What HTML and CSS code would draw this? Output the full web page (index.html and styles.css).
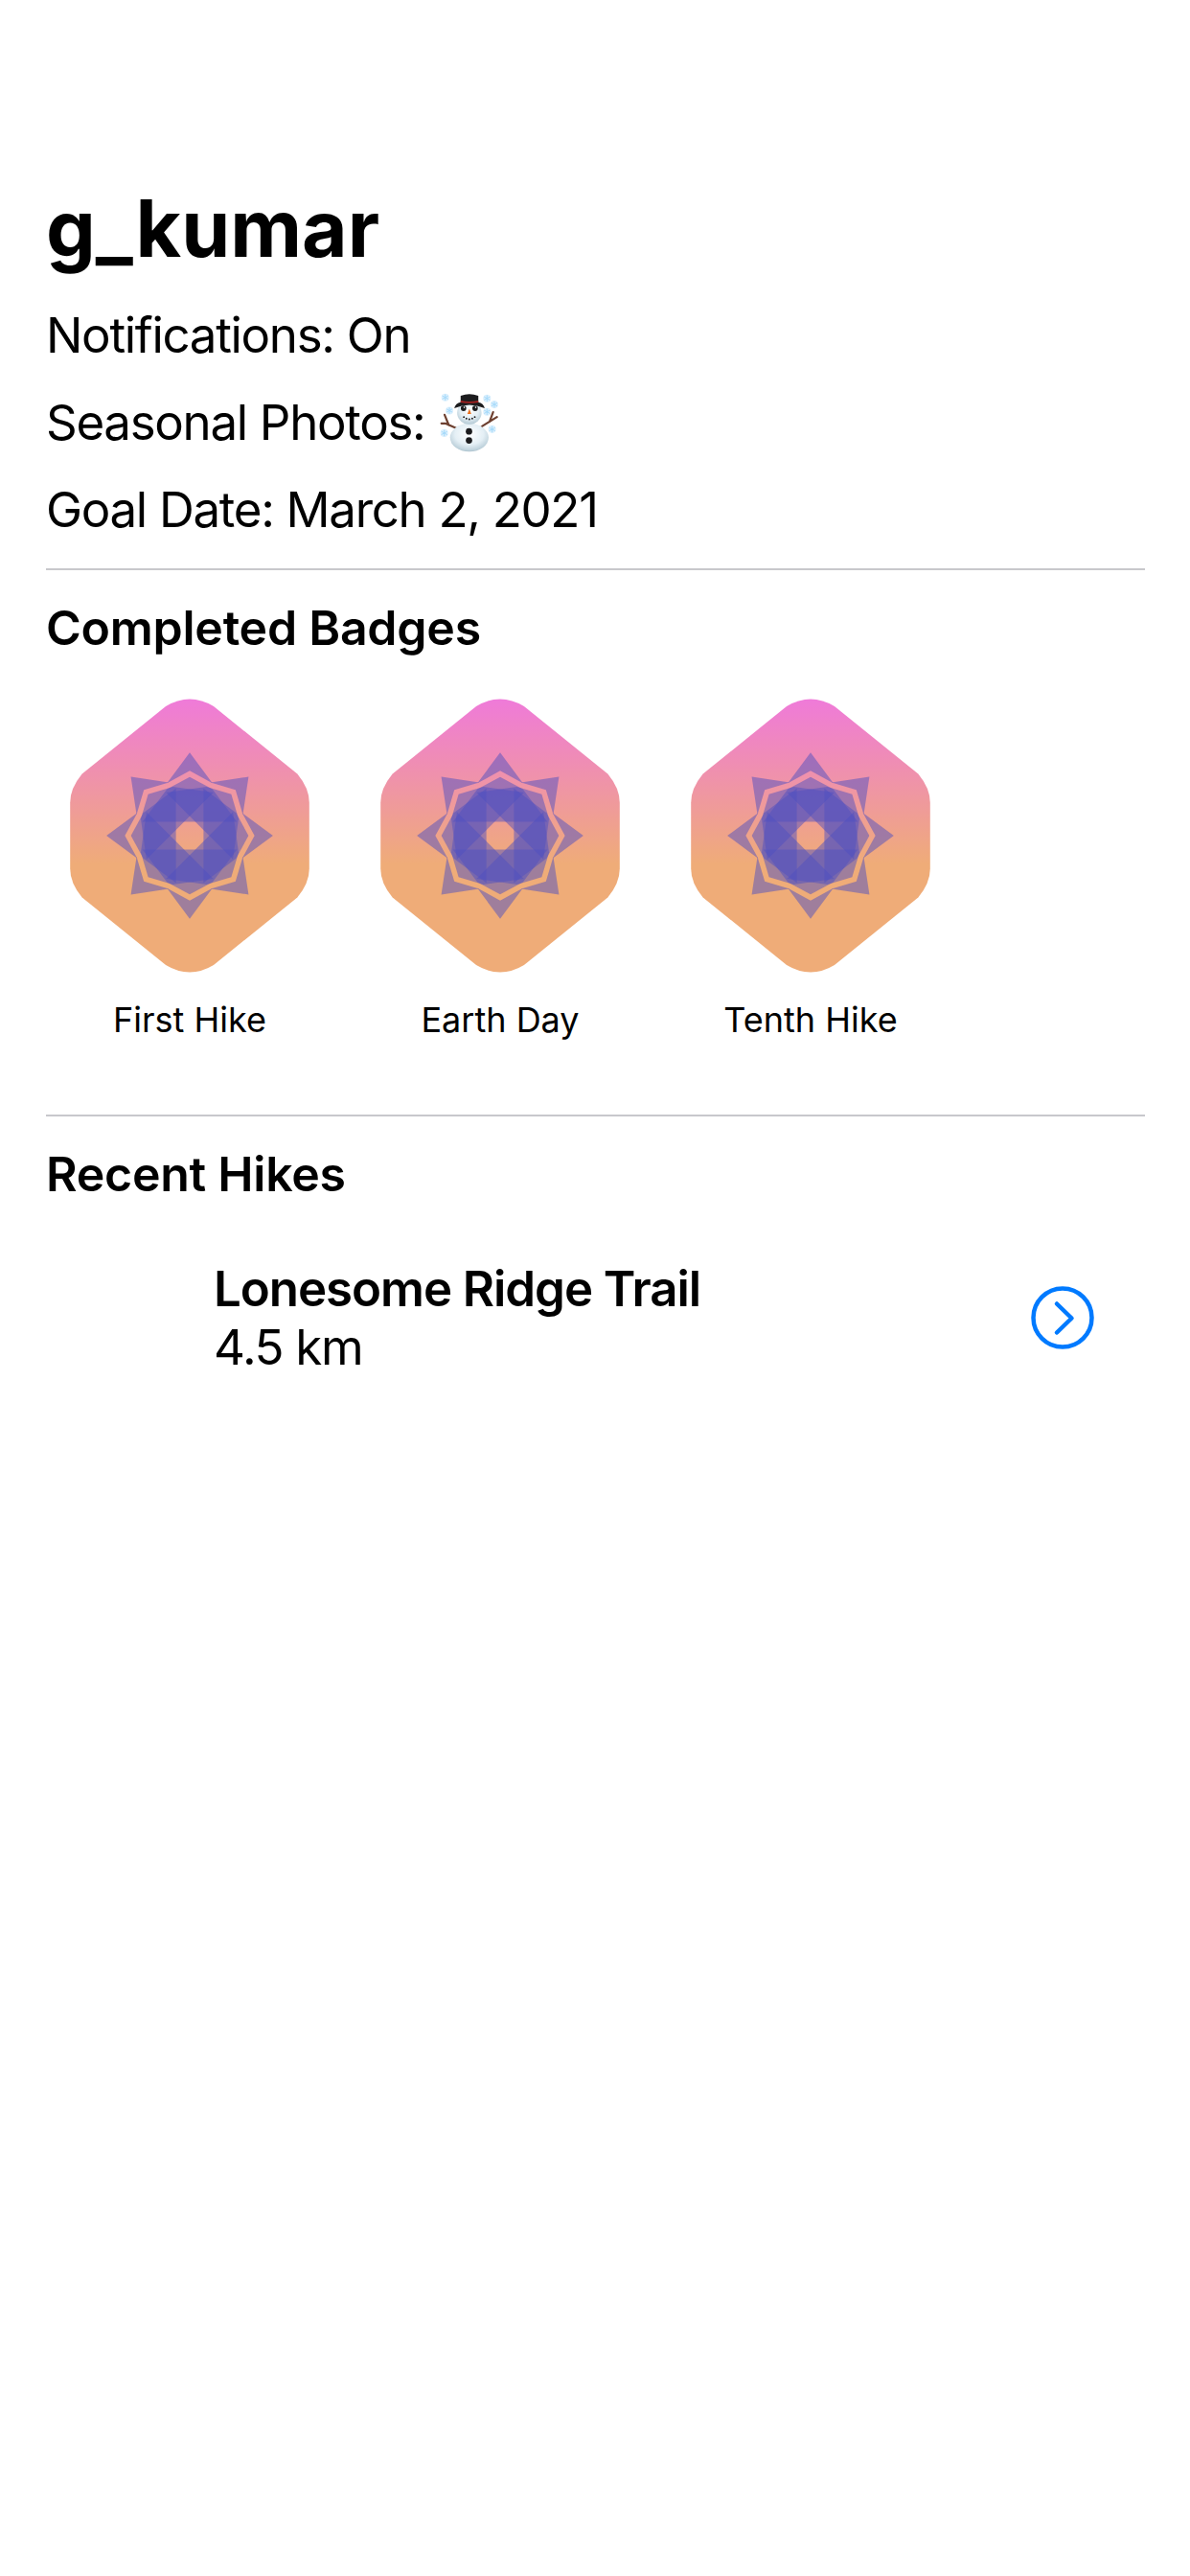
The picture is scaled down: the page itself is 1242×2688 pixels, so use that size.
FILE: index.html
```html
<!DOCTYPE html>
<html lang="en">
<head>
<meta charset="utf-8">
<title>g_kumar</title>
<link rel="stylesheet" href="styles.css">
</head>
<body>
<svg class="defs" width="0" height="0" aria-hidden="true">
  <defs>
    <linearGradient id="badgeFill" gradientUnits="userSpaceOnUse" x1="0" y1="0" x2="0" y2="180">
      <stop offset="0" stop-color="#ef78dd"/>
      <stop offset="1" stop-color="#efac78"/>
    </linearGradient>
    <g id="ray" fill="#4f4fbf" fill-opacity="0.5">
      <path d="M150 63.15 L126.27 95.28 L150 82.36 L173.73 95.28 Z"/>
      <path d="M150 88.66 L126.27 101.58 L100.65 135.6 L199.35 135.6 L173.73 101.58 Z"/>
    </g>
    <symbol id="badge" viewBox="0 0 300 300">
      <path fill="url(#badgeFill)" d="M262.32 85.5 L174.96 15 Q150 0 125.04 15 L37.68 85.5 Q25.2 100.5 25.2 115.5 L25.2 184.5 Q25.2 199.5 37.68 214.5 L125.04 285 Q150 300 174.96 285 L262.32 214.5 Q274.8 199.5 274.8 184.5 L274.8 115.5 Q274.8 100.5 262.32 85.5 Z"/>
      <use href="#ray"/>
      <use href="#ray" transform="rotate(45 150 150)"/>
      <use href="#ray" transform="rotate(90 150 150)"/>
      <use href="#ray" transform="rotate(135 150 150)"/>
      <use href="#ray" transform="rotate(180 150 150)"/>
      <use href="#ray" transform="rotate(225 150 150)"/>
      <use href="#ray" transform="rotate(270 150 150)"/>
      <use href="#ray" transform="rotate(315 150 150)"/>
    </symbol>
    <radialGradient id="snowBody" cx="0.5" cy="0.38" r="0.68">
      <stop offset="0" stop-color="#ffffff"/>
      <stop offset="0.55" stop-color="#e4eff5"/>
      <stop offset="0.85" stop-color="#bcd0da"/>
      <stop offset="1" stop-color="#8fa9b6"/>
    </radialGradient>
    <g id="flake">
      <circle r="12" fill="#dcf0fd"/>
      <path d="M0 -10V10M-9 -5L9 5M-9 5L9 -5" stroke="#a3d9fa" stroke-width="2.8" fill="none"/>
    </g>
  </defs>
</svg>
<main class="profile">
  <h1 class="username">g_kumar</h1>
  <p class="setting">Notifications: On</p>
  <p class="setting setting-seasonal">Seasonal Photos:
    <svg class="snowman" viewBox="175 65 185 185" role="img" aria-label="snowman">
      <use href="#flake" x="192" y="79"/>
      <use href="#flake" x="205" y="120"/>
      <use href="#flake" x="189" y="190"/>
      <use href="#flake" x="322" y="82"/>
      <use href="#flake" x="345" y="101"/>
      <use href="#flake" x="322" y="124"/>
      <use href="#flake" x="338" y="178"/>
      <path d="M226 175 L192 160 M203 165 L190 133 M192 160 L180 160 M305 170 L353 140 M330 155 L341 125" stroke="#6d4030" stroke-width="6.5" stroke-linecap="round" fill="none"/>
      <ellipse cx="267" cy="204" rx="60" ry="44" fill="url(#snowBody)"/>
      <ellipse cx="267" cy="127" rx="38" ry="36" fill="url(#snowBody)"/>
      <path d="M240 94 L240 74 Q267 63 295 74 L295 94 Q311 97 315 113 Q267 92 220 113 Q224 97 240 94 Z" fill="#1c1c1e"/>
      <path d="M240 89 Q267 94 295 89 L295 95 Q267 99 240 95 Z" fill="#a32020"/>
      <circle cx="249" cy="113" r="8.5" fill="#1c1c1e"/>
      <circle cx="285" cy="113" r="8.5" fill="#1c1c1e"/>
      <circle cx="251" cy="110" r="2.4" fill="#fff"/>
      <circle cx="287" cy="110" r="2.4" fill="#fff"/>
      <path d="M267 114 L261 131 L273 131 Z" fill="#e8701e"/>
      <g fill="#1c1c1e">
        <circle cx="250" cy="140" r="2.8"/><circle cx="258" cy="145" r="2.8"/><circle cx="267" cy="147" r="2.8"/><circle cx="276" cy="145" r="2.8"/><circle cx="284" cy="140" r="2.8"/>
        <circle cx="266" cy="185" r="10"/><circle cx="266" cy="213" r="10"/>
      </g>
    </svg>
  </p>
  <p class="setting">Goal Date: March 2, 2021</p>

  <hr class="rule">
  <h2 class="section-title">Completed Badges</h2>
  <div class="badges">
    <figure class="badge"><svg class="badge-art"><use href="#badge"/></svg><figcaption class="badge-name">First Hike</figcaption></figure>
    <figure class="badge"><svg class="badge-art"><use href="#badge"/></svg><figcaption class="badge-name">Earth Day</figcaption></figure>
    <figure class="badge"><svg class="badge-art"><use href="#badge"/></svg><figcaption class="badge-name">Tenth Hike</figcaption></figure>
  </div>

  <hr class="rule rule-second">
  <h2 class="section-title">Recent Hikes</h2>
  <div class="hike">
    <div class="hike-text">
      <div class="hike-name">Lonesome Ridge Trail</div>
      <div class="hike-distance">4.5 km</div>
    </div>
    <svg class="disclosure" viewBox="0 0 68 68" role="img" aria-label="Show details">
      <circle cx="34" cy="34" r="30.5" fill="none" stroke="#007aff" stroke-width="4.5"/>
      <path d="M28 19.5 L43.5 34.5 L28 49.5" fill="none" stroke="#007aff" stroke-width="4.5" stroke-linecap="round" stroke-linejoin="round"/>
    </svg>
  </div>
</main>
</body>
</html>
```
FILE: styles.css
```css
* { box-sizing: border-box; }
html, body { margin: 0; background: #fff; }
body {
  width: 1242px;
  height: 2688px;
  overflow: hidden;
  color: #000;
  font-family: Inter, "Liberation Sans", sans-serif;
}
.defs { position: absolute; }
.profile {
  display: flex;
  flex-direction: column;
  padding: 189px 47px 0 48px;
}
.username {
  margin: 0 0 31px;
  font-size: 82px;
  line-height: 100px;
  font-weight: 700;
  letter-spacing: 0;
}
.setting {
  margin: 0 0 31px;
  font-size: 51px;
  line-height: 60px;
  font-weight: 400;
  letter-spacing: -1.3px;
}
.setting-seasonal {
  display: flex;
  align-items: center;
  gap: 16px;
  height: 60px;
}
.snowman {
  width: 62px;
  height: 62px;
  flex: none;
}
.rule {
  width: 100%;
  height: 2px;
  margin: 0;
  border: 0;
  background: #c8c8cc;
}
.section-title {
  margin: 30px 0 0;
  font-size: 50px;
  line-height: 60px;
  font-weight: 600;
  letter-spacing: -0.25px;
}
.badges {
  display: flex;
  gap: 24px;
  margin-top: 37px;
}
.badge {
  width: 300px;
  margin: 0;
  display: flex;
  flex-direction: column;
  align-items: center;
}
.badge-art {
  width: 300px;
  height: 300px;
  display: block;
}
.badge-name {
  margin-top: 20px;
  font-size: 36px;
  line-height: 44px;
  letter-spacing: 0;
}
.rule-second { margin-top: 77px; }
.hike {
  display: flex;
  align-items: center;
  justify-content: space-between;
  margin-top: 59px;
  padding: 0 52px 0 175px;
}
.hike-name {
  font-size: 51px;
  line-height: 61px;
  font-weight: 600;
  letter-spacing: -1.05px;
}
.hike-distance {
  font-size: 51px;
  line-height: 61px;
  letter-spacing: -1.3px;
}
.disclosure {
  width: 68px;
  height: 68px;
  flex: none;
}
```
